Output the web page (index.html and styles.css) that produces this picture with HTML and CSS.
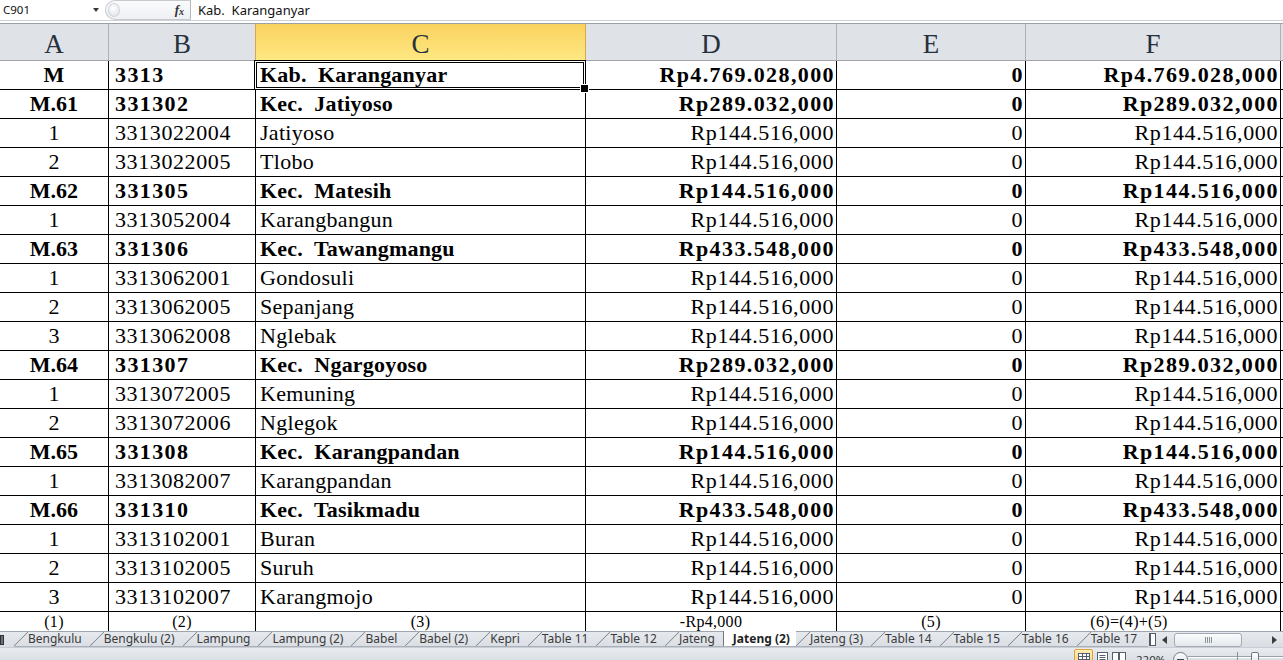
FILE: index.html
```html
<!DOCTYPE html>
<html>
<head>
<meta charset="utf-8">
<title>Jateng (2)</title>
<link rel="stylesheet" href="styles.css">
</head>
<body>
<div class="app">
  <div class="fbar">
    <div class="namebox"><span class="nb-text">C901</span><span class="nb-arrow"></span></div>
    <div class="fmid"><span class="grip"></span><span class="fx"><i>f</i><i class="fxx">x</i></span></div>
    <div class="formula">Kab.  Karanganyar</div>
  </div>
  <div class="fsep"></div>
  <div class="sheet">
    <div class="grid">
      <div class="ch">A</div>
      <div class="ch presel">B</div>
      <div class="ch selh">C</div>
      <div class="ch">D</div>
      <div class="ch">E</div>
      <div class="ch">F</div>
      <div class="ch chg"></div>

      <div class="row bold"><div class="c ca">M</div><div class="c cb">3313</div><div class="c cc sel">Kab.  Karanganyar</div><div class="c cd">Rp4.769.028,000</div><div class="c ce">0</div><div class="c cf">Rp4.769.028,000</div><div class="c cg"></div></div>
      <div class="row bold"><div class="c ca">M.61</div><div class="c cb">331302</div><div class="c cc">Kec.  Jatiyoso</div><div class="c cd">Rp289.032,000</div><div class="c ce">0</div><div class="c cf">Rp289.032,000</div><div class="c cg"></div></div>
      <div class="row"><div class="c ca">1</div><div class="c cb">3313022004</div><div class="c cc">Jatiyoso</div><div class="c cd">Rp144.516,000</div><div class="c ce">0</div><div class="c cf">Rp144.516,000</div><div class="c cg"></div></div>
      <div class="row"><div class="c ca">2</div><div class="c cb">3313022005</div><div class="c cc">Tlobo</div><div class="c cd">Rp144.516,000</div><div class="c ce">0</div><div class="c cf">Rp144.516,000</div><div class="c cg"></div></div>
      <div class="row bold"><div class="c ca">M.62</div><div class="c cb">331305</div><div class="c cc">Kec.  Matesih</div><div class="c cd">Rp144.516,000</div><div class="c ce">0</div><div class="c cf">Rp144.516,000</div><div class="c cg"></div></div>
      <div class="row"><div class="c ca">1</div><div class="c cb">3313052004</div><div class="c cc">Karangbangun</div><div class="c cd">Rp144.516,000</div><div class="c ce">0</div><div class="c cf">Rp144.516,000</div><div class="c cg"></div></div>
      <div class="row bold"><div class="c ca">M.63</div><div class="c cb">331306</div><div class="c cc">Kec.  Tawangmangu</div><div class="c cd">Rp433.548,000</div><div class="c ce">0</div><div class="c cf">Rp433.548,000</div><div class="c cg"></div></div>
      <div class="row"><div class="c ca">1</div><div class="c cb">3313062001</div><div class="c cc">Gondosuli</div><div class="c cd">Rp144.516,000</div><div class="c ce">0</div><div class="c cf">Rp144.516,000</div><div class="c cg"></div></div>
      <div class="row"><div class="c ca">2</div><div class="c cb">3313062005</div><div class="c cc">Sepanjang</div><div class="c cd">Rp144.516,000</div><div class="c ce">0</div><div class="c cf">Rp144.516,000</div><div class="c cg"></div></div>
      <div class="row"><div class="c ca">3</div><div class="c cb">3313062008</div><div class="c cc">Nglebak</div><div class="c cd">Rp144.516,000</div><div class="c ce">0</div><div class="c cf">Rp144.516,000</div><div class="c cg"></div></div>
      <div class="row bold"><div class="c ca">M.64</div><div class="c cb">331307</div><div class="c cc">Kec.  Ngargoyoso</div><div class="c cd">Rp289.032,000</div><div class="c ce">0</div><div class="c cf">Rp289.032,000</div><div class="c cg"></div></div>
      <div class="row"><div class="c ca">1</div><div class="c cb">3313072005</div><div class="c cc">Kemuning</div><div class="c cd">Rp144.516,000</div><div class="c ce">0</div><div class="c cf">Rp144.516,000</div><div class="c cg"></div></div>
      <div class="row"><div class="c ca">2</div><div class="c cb">3313072006</div><div class="c cc">Nglegok</div><div class="c cd">Rp144.516,000</div><div class="c ce">0</div><div class="c cf">Rp144.516,000</div><div class="c cg"></div></div>
      <div class="row bold"><div class="c ca">M.65</div><div class="c cb">331308</div><div class="c cc">Kec.  Karangpandan</div><div class="c cd">Rp144.516,000</div><div class="c ce">0</div><div class="c cf">Rp144.516,000</div><div class="c cg"></div></div>
      <div class="row"><div class="c ca">1</div><div class="c cb">3313082007</div><div class="c cc">Karangpandan</div><div class="c cd">Rp144.516,000</div><div class="c ce">0</div><div class="c cf">Rp144.516,000</div><div class="c cg"></div></div>
      <div class="row bold"><div class="c ca">M.66</div><div class="c cb">331310</div><div class="c cc">Kec.  Tasikmadu</div><div class="c cd">Rp433.548,000</div><div class="c ce">0</div><div class="c cf">Rp433.548,000</div><div class="c cg"></div></div>
      <div class="row"><div class="c ca">1</div><div class="c cb">3313102001</div><div class="c cc">Buran</div><div class="c cd">Rp144.516,000</div><div class="c ce">0</div><div class="c cf">Rp144.516,000</div><div class="c cg"></div></div>
      <div class="row"><div class="c ca">2</div><div class="c cb">3313102005</div><div class="c cc">Suruh</div><div class="c cd">Rp144.516,000</div><div class="c ce">0</div><div class="c cf">Rp144.516,000</div><div class="c cg"></div></div>
      <div class="row"><div class="c ca">3</div><div class="c cb">3313102007</div><div class="c cc">Karangmojo</div><div class="c cd">Rp144.516,000</div><div class="c ce">0</div><div class="c cf">Rp144.516,000</div><div class="c cg"></div></div>
      <div class="row last"><div class="c ca">(1)</div><div class="c cb">(2)</div><div class="c cc">(3)</div><div class="c cd">-Rp4,000</div><div class="c ce">(5)</div><div class="c cf">(6)=(4)+(5)</div><div class="c cg"></div></div>
    </div>
  </div>
  <div class="tabbar">
    <div class="tabnav"><span class="navbox"></span></div>
    <div class="tabs">
      <div class="tab">Bengkulu</div>
      <div class="tab">Bengkulu (2)</div>
      <div class="tab">Lampung</div>
      <div class="tab">Lampung (2)</div>
      <div class="tab">Babel</div>
      <div class="tab">Babel (2)</div>
      <div class="tab">Kepri</div>
      <div class="tab">Table 11</div>
      <div class="tab">Table 12</div>
      <div class="tab">Jateng</div>
      <div class="tab active">Jateng (2)</div>
      <div class="tab">Jateng (3)</div>
      <div class="tab">Table 14</div>
      <div class="tab">Table 15</div>
      <div class="tab">Table 16</div>
      <div class="tab">Table 17</div>
    </div>
    <div class="splitter"></div>
    <div class="hscroll">
      <span class="arr-l"></span>
      <span class="thumb"><span class="tgrip"></span></span>
      <span class="arr-r"></span>
    </div>
  </div>
  <div class="status">
    <div class="status-in">
      <span class="vbtn on">
        <svg width="12" height="10" viewBox="0 0 12 10"><rect x="0.5" y="0.5" width="11" height="9" fill="#fff" stroke="#55606e"/><path d="M0.5 3.5H11.5M0.5 6.5H11.5M4.5 0.5V9.5M8.5 0.5V9.5" stroke="#55606e" stroke-width="1"/></svg>
      </span>
      <span class="vbtn">
        <svg width="11" height="12" viewBox="0 0 11 12"><rect x="0.5" y="0.5" width="10" height="11" fill="#fff" stroke="#55606e"/><path d="M2.5 3.5H8.5M2.5 5.5H8.5M2.5 7.5H8.5" stroke="#55606e"/></svg>
      </span>
      <span class="vbtn">
        <svg width="14" height="12" viewBox="0 0 14 12"><rect x="0.5" y="0.5" width="6" height="11" fill="#fff" stroke="#55606e"/><rect x="7.5" y="0.5" width="6" height="11" fill="#fff" stroke="#55606e"/></svg>
      </span>
      <span class="zoomtxt">220%</span>
      <span class="zminus"><span class="mline"></span></span>
      <span class="slider"><span class="tick"></span><span class="sthumb"></span></span>
    </div>
  </div>
</div>
</body>
</html>
```

FILE: styles.css
```css
* { box-sizing: border-box; margin: 0; padding: 0; }
html, body { width: 1283px; height: 660px; overflow: hidden; background: #fff; }
body { font-family: "Liberation Serif", "Times New Roman", serif; color: #000; }

.app { display: flex; flex-direction: column; height: 660px; }

/* formula bar */
.fbar { height: 20px; display: flex; font-family: "Noto Sans", "Open Sans", sans-serif; flex: 0 0 20px; }
.namebox { width: 105px; display: flex; align-items: center; padding: 0 0 0 3px; font-size: 11.5px; color: #111; }
.nb-text { flex: 1; line-height: 20px; }
.nb-arrow { width: 0; height: 0; margin-right: 6px; border-left: 3.5px solid transparent; border-right: 3.5px solid transparent; border-top: 4px solid #3a3a3a; }
.fmid { width: 86px; display: flex; align-items: center; justify-content: space-between; background: linear-gradient(#fbfbfc, #eef0f3); border: 1px solid #c6cad0; border-right: 1px solid #b3b8bf; border-radius: 10px 0 0 10px; padding: 0 6px 0 2px; }
.grip { width: 12px; height: 14px; border-radius: 50%; background: radial-gradient(circle at 40% 35%, #ffffff, #dde0e4); border: 1px solid #d0d4d9; }
.fx { font-family: "Liberation Serif", serif; font-weight: bold; font-size: 13px; color: #333; line-height: 18px; }
.fxx { font-size: 10px; position: relative; top: 1px; }
.formula { flex: 1; padding-left: 7px; font-size: 13px; line-height: 20px; white-space: pre; color: #111; }

.fsep { flex: 0 0 4px; border-top: 1px solid #cdd1d6; border-bottom: 1px solid #9ba1a8; background: #fff; }

/* sheet */
.sheet { flex: 0 0 607px; overflow: hidden; }
.grid { display: grid; grid-template-columns: 109px 147px 330px 251px 189px 255px 2px; grid-template-rows: 37px repeat(20, 29px); }
.row { display: contents; }

.ch { background: #dfe3e8; border-right: 1px solid #acb1b7; border-bottom: 1px solid #9ea4aa; font-size: 27px; line-height: 32px; padding-top: 4px; text-align: center; color: #27313c; }
.ch.presel { border-right-color: #dca64e; }
.ch.selh { background: linear-gradient(#f9d25f, #fee882); border-right-color: #dca64e; border-bottom-color: #dca64e; }
.ch.chg { border-right: none; }

.c { border-right: 1px solid #000; border-bottom: 1px solid #000; font-size: 22px; line-height: 28px; white-space: pre; overflow: hidden; }
.ca { text-align: center; }
.cb { padding-left: 6px; letter-spacing: 0.6px; }
.cc { padding-left: 4px; letter-spacing: 0.3px; }
.cd, .ce, .cf { text-align: right; padding-right: 2px; letter-spacing: 0.6px; }
.cg { border-right: none; }
.bold .c { font-weight: bold; }
.bold .cb, .bold .cd, .bold .ce, .bold .cf { letter-spacing: 1.4px; padding-right: 1px; }
.bold .cc { letter-spacing: 0.2px; }

.last .c { font-size: 16px; line-height: 20px; text-align: center; padding: 0; letter-spacing: 0.3px; }
.last .cf { padding-right: 48px; }

.sel { position: relative; overflow: visible; }
.sel::after { content: ""; position: absolute; left: -2px; top: -1px; right: -1px; bottom: -1px; border: 1px solid #000; box-shadow: inset 0 0 0 1px #fff, inset 0 0 0 2px #000; z-index: 2; }
.sel::before { content: ""; position: absolute; right: -4px; bottom: -4px; width: 7px; height: 7px; background: #000; border: 1px solid #fff; z-index: 3; }

/* sheet tabs */
.tabbar { flex: 0 0 16px; display: flex; background: linear-gradient(#e6e9ed, #dadee4); border-top: 1px solid #9ea5ad; font-family: "Noto Sans", "Open Sans", sans-serif; font-size: 12px; color: #3a3a3a; }
.tabnav { width: 14px; display: flex; align-items: center; }
.navbox { width: 4px; height: 10px; background: #6a717a; border: 1px solid #2f3338; }
.tabs { width: 1134px; display: flex; border-bottom: 1px solid #aab0b8; }
.tab { position: relative; padding: 0 8px 0 14px; line-height: 14px; white-space: pre; flex: 0 0 auto; }
.tab::before { content: ""; position: absolute; left: 0; top: 0; bottom: 0; width: 14px; background: linear-gradient(to top left, transparent calc(50% - 0.8px), #8a9199 50%, transparent calc(50% + 0.8px)); }
.tab.active { background: #fff; font-weight: bold; color: #222; padding: 0 6px 0 9px; border-left: 1px solid #6f767e; margin-top: -1px; line-height: 15px; }
.tab.active::before { display: none; }

.splitter { width: 7px; margin-left: 1px; margin-top: 1px; height: 13px; background: #fff; border: 1px solid #555b62; border-left-width: 2px; }
.hscroll { flex: 1; display: flex; align-items: center; }
.arr-l { margin-left: 6px; width: 0; height: 0; border-top: 4px solid transparent; border-bottom: 4px solid transparent; border-right: 5px solid #3c3c3c; }
.thumb { margin-left: 7px; width: 68px; height: 14px; border: 1px solid #a3aab3; border-radius: 3px; background: linear-gradient(#fbfcfd, #e4e8ec); display: flex; align-items: center; justify-content: center; }
.tgrip { width: 7px; height: 6px; background: repeating-linear-gradient(to right, #8c939b 0 1px, transparent 1px 2px); }
.arr-r { margin-left: auto; margin-right: 6px; width: 0; height: 0; border-top: 4px solid transparent; border-bottom: 4px solid transparent; border-left: 5px solid #3c3c3c; }

/* status bar */
.status { flex: 0 0 13px; overflow: hidden; background: linear-gradient(#e8ebef, #dbe0e6); border-top: 1px solid #c9ced5; font-family: "Noto Sans", "Open Sans", sans-serif; }
.status-in { height: 26px; display: flex; align-items: flex-start; padding-left: 1074px; }
.vbtn { display: flex; align-items: center; justify-content: center; margin-top: 2px; height: 16px; margin-left: 3px; }
.vbtn:first-child { margin-left: 0; }
.vbtn.on { width: 19px; margin-top: 1px; height: 18px; border: 1px solid #e0a33c; border-radius: 2px; background: linear-gradient(#fdeeb2, #f8d57a); }
.vbtn + .vbtn { margin-left: 4px; }
.zoomtxt { margin-left: 10px; margin-top: 5px; font-size: 11.5px; line-height: 14px; color: #333; }
.zminus { margin-left: 8px; margin-top: 4px; width: 15px; height: 15px; border-radius: 50%; border: 1px solid #737b85; background: linear-gradient(#fdfdfe, #d9dde3); display: flex; align-items: center; justify-content: center; }
.mline { width: 7px; height: 2px; background: #3c4450; }
.slider { position: relative; flex: 1; margin-top: 8px; height: 2px; border-top: 1px solid #9aa1a9; border-bottom: 1px solid #fff; }
.tick { position: absolute; left: 49px; top: -5px; width: 1px; height: 10px; background: #8a9199; }
.sthumb { position: absolute; left: 63px; top: -5px; width: 8px; height: 13px; border: 1px solid #6f7782; border-radius: 2px; background: linear-gradient(#ffffff, #dfe3e8); }
```
